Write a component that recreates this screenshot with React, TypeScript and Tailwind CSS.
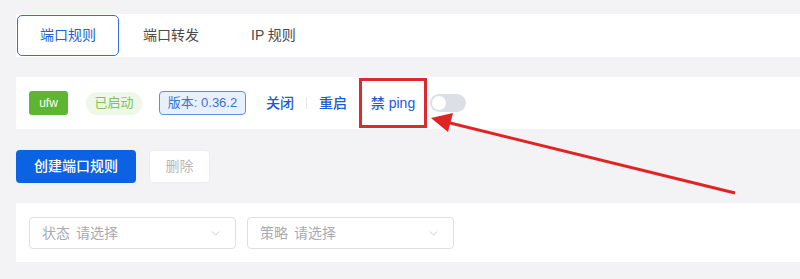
import { ChevronDown } from "lucide-react";

const font = { fontFamily: '"Liberation Sans", "Noto Sans CJK SC", sans-serif' };

function Tabs() {
  return (
    <div className="flex h-[43px] items-stretch bg-white p-px">
      <div className="flex w-[102px] items-center justify-center rounded-[5px] border-[1.5px] border-[#2f6fe4] text-[14px] text-[#1e5fd6]">
        端口规则
      </div>
      <div className="flex items-center pl-[24px] pr-[26px] text-[14px] text-[#4a4a4a]">端口转发</div>
      <div className="flex items-center pl-[26px] text-[14px] text-[#4a4a4a]">IP 规则</div>
    </div>
  );
}

function StatusBar() {
  return (
    <div className="flex h-[52px] items-center bg-white pl-[13px]">
      <span className="flex h-[24px] w-[39px] items-center justify-center rounded-[3px] bg-[#5db532] text-[12px] text-white">
        ufw
      </span>
      <span className="ml-[18px] flex h-[23px] w-[56px] items-center justify-center rounded-full bg-[#eef7e8] text-[13px] text-[#7cc35a]">
        已启动
      </span>
      <span className="ml-[17px] flex h-[24px] w-[87px] items-center justify-center rounded-[4px] border border-[#5b8fe9] bg-[#e8f0fd] text-[13px] text-[#3a72d6]">
        版本: 0.36.2
      </span>
      <span className="ml-[20px] text-[14px] font-medium text-[#1a5bd6]">关闭</span>
      <span className="mx-[12px] h-[12px] w-px bg-[#e6e6e6]" />
      <span className="text-[14px] font-medium text-[#1a5bd6]">重启</span>
      <div className="ml-[12px] flex h-[50px] w-[68px] items-center justify-center border-[3px] border-[#dd2a2a]">
        <span className="text-[14px] font-medium text-[#1a5bd6]">禁 ping</span>
      </div>
      <span className="ml-[3px] flex h-[18px] w-[36px] items-center rounded-full bg-[#dcdfe6] pl-[2px]">
        <span className="h-[14px] w-[14px] rounded-full bg-white" />
      </span>
    </div>
  );
}

function Select({ label }: { label: string }) {
  return (
    <div className="flex h-[32px] w-[207px] items-center justify-between rounded-[4px] border border-[#dcdfe6] bg-white pl-[12px] pr-[13px] text-[14px] text-[#a8abb2]">
      <span>
        {label} <span className="ml-[2px]">请选择</span>
      </span>
      <ChevronDown size={13} strokeWidth={1.3} className="text-[#b4b7bd]" />
    </div>
  );
}

export default function App() {
  return (
    <div className="relative h-[279px] w-[800px] overflow-hidden bg-[#f3f3f5] pl-4 pt-[14px]" style={font}>
      <Tabs />
      <div className="mt-[20px]">
        <StatusBar />
      </div>
      <div className="mt-[21px] flex gap-[13px]">
        <button className="flex h-[33px] w-[120px] items-center justify-center rounded-[4px] bg-[#0b62e2] text-[14px] font-medium text-white">
          创建端口规则
        </button>
        <button className="flex h-[33px] w-[61px] items-center justify-center rounded-[4px] border border-[#ececec] bg-white text-[14px] text-[#b8b8b8]">
          删除
        </button>
      </div>
      <div className="mt-[20px] flex h-[59px] items-start gap-[11px] bg-white pl-[13px] pt-[14px]">
        <Select label="状态" />
        <Select label="策略" />
      </div>
      <svg className="pointer-events-none absolute left-0 top-0" width="800" height="279">
        <line x1="735" y1="193" x2="446" y2="122" stroke="#e02424" strokeWidth="3" />
        <polygon points="431,118 453,113 448,132" fill="#e02424" />
      </svg>
    </div>
  );
}
